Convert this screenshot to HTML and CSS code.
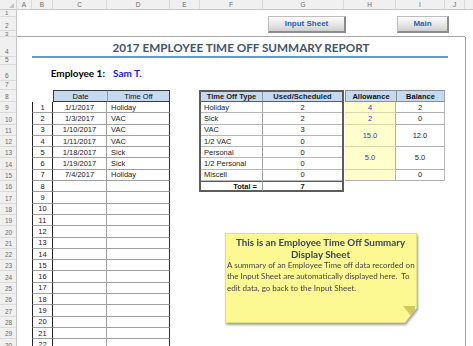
FILE: index.html
```html
<!DOCTYPE html>
<html>
<head>
<meta charset="utf-8">
<link rel="stylesheet" href="styles.css">
</head>
<body>
<div class="sheet">
  <div class="corner"><span class="tri"></span></div>
  <div class="ch">A</div><div class="ch">B</div><div class="ch">C</div><div class="ch">D</div><div class="ch">E</div>
  <div class="ch">F</div><div class="ch">G</div><div class="ch">H</div><div class="ch">I</div><div class="ch">J</div><div class="ch ch-k"></div>

  <div class="rowheads">
    <div class="tiny">1</div><div>2</div><div class="tiny">3</div><div>4</div><div>5</div><div>6</div><div>7</div><div>8</div>
    <div>9</div><div>10</div><div>11</div><div>12</div><div>13</div><div>14</div><div>15</div><div>16</div>
    <div>17</div><div>18</div><div>19</div><div>20</div><div>21</div><div>22</div><div>23</div><div>24</div>
    <div>25</div><div>26</div><div>27</div><div>28</div><div>29</div><div>30</div>
  </div>

  <div class="btn btn-input">Input Sheet</div>
  <div class="btn btn-main">Main</div>

  <div class="frame-top"></div>
  <div class="frame-right"></div>

  <div class="title">2017 EMPLOYEE TIME OFF SUMMARY REPORT</div>

  <div class="emp-label">Employee 1:</div>
  <div class="emp-name">Sam T.</div>

  <div class="dt">
    <div class="dt-blank"></div><div class="dt-h">Date</div><div class="dt-h dt-h2">Time Off</div>
    <div class="n">1</div><div class="d">1/1/2017</div><div class="t">Holiday</div>
    <div class="n">2</div><div class="d">1/3/2017</div><div class="t">VAC</div>
    <div class="n">3</div><div class="d">1/10/2017</div><div class="t">VAC</div>
    <div class="n">4</div><div class="d">1/11/2017</div><div class="t">VAC</div>
    <div class="n">5</div><div class="d">1/18/2017</div><div class="t">Sick</div>
    <div class="n">6</div><div class="d">1/19/2017</div><div class="t">Sick</div>
    <div class="n">7</div><div class="d">7/4/2017</div><div class="t">Holiday</div>
    <div class="n">8</div><div class="d"></div><div class="t"></div>
    <div class="n">9</div><div class="d"></div><div class="t"></div>
    <div class="n">10</div><div class="d"></div><div class="t"></div>
    <div class="n">11</div><div class="d"></div><div class="t"></div>
    <div class="n">12</div><div class="d"></div><div class="t"></div>
    <div class="n">13</div><div class="d"></div><div class="t"></div>
    <div class="n">14</div><div class="d"></div><div class="t"></div>
    <div class="n">15</div><div class="d"></div><div class="t"></div>
    <div class="n">16</div><div class="d"></div><div class="t"></div>
    <div class="n">17</div><div class="d"></div><div class="t"></div>
    <div class="n">18</div><div class="d"></div><div class="t"></div>
    <div class="n">19</div><div class="d"></div><div class="t"></div>
    <div class="n">20</div><div class="d"></div><div class="t"></div>
    <div class="n">21</div><div class="d"></div><div class="t"></div>
    <div class="n">22</div><div class="d"></div><div class="t"></div>
  </div>

  <div class="tot">
    <div class="th">Time Off Type</div><div class="th th2">Used/Scheduled</div>
    <div class="ty">Holiday</div><div class="us">2</div>
    <div class="ty">Sick</div><div class="us">2</div>
    <div class="ty">VAC</div><div class="us">3</div>
    <div class="ty">1/2 VAC</div><div class="us">0</div>
    <div class="ty">Personal</div><div class="us">0</div>
    <div class="ty">1/2 Personal</div><div class="us">0</div>
    <div class="ty">Miscell</div><div class="us">0</div>
    <div class="total-l">Total =</div><div class="total-v">7</div>
  </div>

  <div class="ab">
    <div class="ah">Allowance</div><div class="ah ah2">Balance</div>
    <div class="al r1">4</div><div class="ba r1">2</div>
    <div class="al r2">2</div><div class="ba r2">0</div>
    <div class="al r3">15.0</div><div class="ba r3">12.0</div>
    <div class="al r4">5.0</div><div class="ba r4">5.0</div>
    <div class="al r5"></div><div class="ba r5">0</div>
  </div>

  <div class="note-wrap">
    <div class="note">
      <div class="note-title">This is an Employee Time Off Summary<br>Display Sheet</div>
      <div class="note-body">A summary of an Employee Time off data recorded on<br>the Input Sheet are automatically displayed here.&nbsp; To<br>edit data, go back to the Input Sheet.</div>
      <span class="fold"></span>
    </div>
  </div>
</div>
</body>
</html>
```

FILE: styles.css
```css
html, body {
  margin: 0;
  padding: 0;
  background: #ffffff;
  overflow: hidden;
}

.sheet {
  width: 473px;
  height: 346px;
  overflow: hidden;
  display: grid;
  grid-template-columns: 17px 15px 21px 54px 63px 30px 63px 81px 52px 49px 20px 1fr;
  grid-template-rows: 10px 7px 14px 6px 20px 8px 16px 9px 12px repeat(22, 11.3px);
  font-family: "Liberation Sans", Arial, sans-serif;
  font-size: 7.5px;
  color: #000;
}

/* headers */
.corner {
  grid-column: 1;
  grid-row: 1;
  background: #f0f0f0;
  border-right: 1px solid #d4d4d4;
  border-bottom: 1px solid #c8c8c8;
  box-sizing: border-box;
  position: relative;
}
.tri {
  position: absolute;
  right: 2px;
  bottom: 1px;
  width: 0;
  height: 0;
  border-left: 5px solid transparent;
  border-bottom: 5px solid #c4c4c4;
}
.ch {
  grid-row: 1;
  background: #f0f0f0;
  border-right: 1px solid #d9d9d9;
  border-bottom: 1px solid #c8c8c8;
  box-sizing: border-box;
  color: #6a6a6a;
  font-size: 6.5px;
  line-height: 9px;
  text-align: center;
}
.ch-k { border-right: none; }

.rowheads {
  grid-column: 1;
  grid-row: 2 / -1;
  display: grid;
  grid-template-rows: 7px 14px 6px 20px 8px 16px 9px 12px repeat(22, 11.3px);
  background: #f0f0f0;
  border-right: 1px solid #c8c8c8;
  box-sizing: border-box;
}
.rowheads div {
  border-bottom: 1px solid #dadada;
  box-sizing: border-box;
  color: #6a6a6a;
  font-size: 6.5px;
  display: flex;
  align-items: flex-end;
  padding-left: 5px;
  padding-bottom: 1px;
  line-height: 7px;
}
.rowheads .tiny {
  align-items: center;
  padding-bottom: 0;
  line-height: 6px;
  font-size: 6px;
}

/* buttons */
.btn {
  grid-row: 3;
  align-self: center;
  height: 17px;
  box-sizing: border-box;
  background: linear-gradient(#fdfdfd, #e6e6e6 55%, #cfcfcf);
  border: 1px solid #bdbdbd;
  border-right: 2px solid #8c8c8c;
  border-bottom: 2px solid #8c8c8c;
  color: #1f5fc4;
  font-weight: bold;
  font-size: 8px;
  display: flex;
  align-items: center;
  justify-content: center;
}
.btn-input {
  grid-column: 8 / 10;
  margin-left: 5px;
  width: 78px;
}
.btn-main {
  grid-column: 10 / 12;
  margin-left: 1px;
  width: 52px;
}

/* frame */
.frame-top {
  grid-column: 2 / 12;
  grid-row: 4;
  border-bottom: 1px solid #a8a8a8;
}
.frame-right {
  grid-column: 12;
  grid-row: 5 / -1;
  border-left: 1px solid #a8a8a8;
}

/* title */
.title {
  grid-column: 3 / 11;
  grid-row: 5;
  margin-right: -3px;
  border-bottom: 2px solid #5b9bd5;
  color: #44546a;
  font-family: Lato, "Open Sans", sans-serif;
  font-weight: bold;
  font-size: 11.7px;
  text-align: center;
  line-height: 20px;
  height: 21px;
  box-sizing: border-box;
  padding-left: 2px;
  white-space: nowrap;
}

/* employee */
.emp-label {
  grid-column: 3 / 5;
  grid-row: 7;
  text-align: right;
  padding-right: 2px;
  font-family: Lato, "Open Sans", sans-serif;
  font-weight: bold;
  font-size: 10px;
  line-height: 16px;
}
.emp-name {
  grid-column: 5 / 7;
  grid-row: 7;
  padding-left: 6px;
  color: #1a1ae0;
  font-family: Lato, "Open Sans", sans-serif;
  font-weight: bold;
  font-size: 10px;
  line-height: 16px;
}

/* date table */
.dt {
  grid-column: 3 / 6;
  grid-row: 9 / -1;
  display: grid;
  grid-template-columns: 21px 54px 63px;
  grid-template-rows: 12px repeat(22, 11.3px);
}
.dt > div {
  box-sizing: border-box;
  display: flex;
  align-items: center;
  overflow: hidden;
  white-space: nowrap;
}
.dt-h {
  background: #c5d9f1;
  border-top: 1px solid #3a3a3a;
  border-bottom: 1px solid #3a3a3a;
  border-left: 1px solid #3a3a3a;
  justify-content: center;
  color: #111;
}
.dt-h2 {
  border-right: 1px solid #3a3a3a;
  border-left: 1px solid #9a9a9a;
}
.dt .n {
  border-left: 1px solid #222;
  border-right: 1px solid #222;
  border-bottom: 1px solid #a0a0a0;
  justify-content: center;
  color: #222;
}
.dt .d {
  border-bottom: 1px solid #a0a0a0;
  border-right: 1px solid #a0a0a0;
  justify-content: center;
  color: #222;
}
.dt .t {
  border-bottom: 1px solid #a0a0a0;
  border-right: 1px solid #333;
  padding-left: 4px;
  color: #222;
}

/* time off table */
.tot {
  grid-column: 7 / 9;
  grid-row: 9 / 18;
  margin-left: -1px;
  border: 2px solid #5c5c5c;
  box-sizing: border-box;
  display: grid;
  grid-template-columns: 62px 1fr;
  grid-template-rows: 10px repeat(7, 11.3px) 1fr;
}
.tot > div {
  box-sizing: border-box;
  display: flex;
  align-items: center;
  white-space: nowrap;
  color: #222;
}
.th {
  background: #c5d9f1;
  border-bottom: 1px solid #5c5c5c;
  border-right: 1px solid #9a9a9a;
  justify-content: center;
  font-weight: bold;
  color: #111;
}
.th2 { border-right: none; }
.ty {
  border-bottom: 1px solid #b8b8b8;
  border-right: 1px solid #a0a0a0;
  padding-left: 3px;
}
.us {
  border-bottom: 1px solid #b8b8b8;
  justify-content: center;
}
.total-l {
  border-top: 1px solid #5c5c5c;
  border-right: 1px solid #a0a0a0;
  justify-content: flex-end;
  padding-right: 5px;
  font-weight: bold;
  color: #111 !important;
}
.total-v {
  border-top: 1px solid #5c5c5c;
  justify-content: center;
  font-weight: bold;
  color: #111 !important;
}

/* allowance / balance */
.ab {
  grid-column: 9 / 11;
  grid-row: 9 / 17;
  margin-left: 1px;
  display: grid;
  grid-template-columns: 51px 49px;
  grid-template-rows: 12px repeat(7, 11.3px);
}
.ab > div {
  box-sizing: border-box;
  display: flex;
  align-items: center;
  justify-content: center;
  white-space: nowrap;
}
.ah {
  background: #c5d9f1;
  border: 1px solid #8e8e8e;
  border-right: none;
  font-weight: bold;
  color: #111;
}
.ah2 { border-right: 1px solid #a8a8a8; }
.al {
  grid-column: 1;
  background: #ffffcc;
  color: #3535c8;
  border-bottom: 1px solid #d7d7b0;
  border-right: 1px solid #b0b0b0;
}
.ba {
  grid-column: 2;
  color: #222;
  border-bottom: 1px solid #b0b0b0;
  border-right: 1px solid #b8b8b8;
}
.r1 { grid-row: 2; }
.r2 { grid-row: 3; }
.r3 { grid-row: 4 / 6; }
.r4 { grid-row: 6 / 8; }
.r5 { grid-row: 8; }
.al.r5 { border-bottom-color: #b0b0b0; }

/* sticky note */
.note-wrap {
  grid-column: 7 / 11;
  grid-row: 21 / span 10;
  align-self: start;
  justify-self: start;
  margin-top: 6.5px;
  margin-left: 25px;
  filter: drop-shadow(1px 2px 1px rgba(0, 0, 0, 0.38));
}
.note {
  position: relative;
  width: 192px;
  height: 90px;
  box-sizing: border-box;
  background: #fdf992;
  border: 1px solid #e2dd86;
  clip-path: polygon(0 0, 100% 0, 100% calc(100% - 15px), calc(100% - 12px) 100%, 0 100%);
  padding: 2px 2px 0 1px;
}
.note-title {
  text-align: center;
  font-family: Lato, "Open Sans", sans-serif;
  font-weight: bold;
  font-size: 9.8px;
  line-height: 12px;
  color: #3c4657;
}
.note-body {
  font-family: Lato, "Open Sans", sans-serif;
  font-size: 8px;
  line-height: 11.4px;
  color: #454545;
  white-space: nowrap;
}
.fold {
  position: absolute;
  right: 0;
  bottom: 0;
  width: 0;
  height: 0;
  border-top: 15px solid #cfc95f;
  border-left: 12px solid transparent;
  transform: translate(-1px, -1px);
}
```
